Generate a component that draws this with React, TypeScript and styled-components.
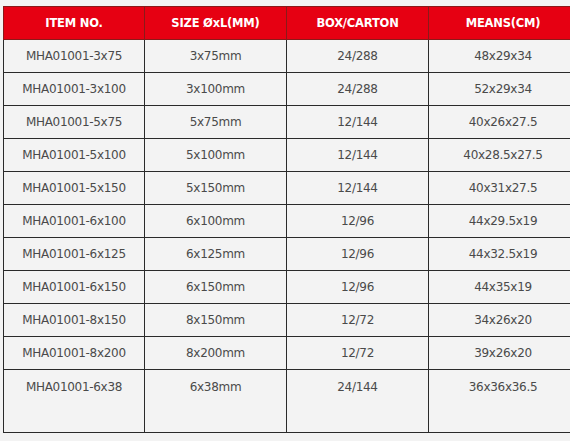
import React from 'react';
import styled, { createGlobalStyle } from 'styled-components';

const GlobalStyle = createGlobalStyle`
  html, body {
    margin: 0;
    padding: 0;
    background: #f3f3f3;
  }
`;

const Page = styled.div`
  padding: 6px 0 0 3px;
  width: 570px;
  height: 441px;
  box-sizing: border-box;
  overflow: hidden;
  background: #f3f3f3;
  font-family: 'DejaVu Sans', Verdana, sans-serif;
`;

const Table = styled.table`
  border-collapse: collapse;
  table-layout: fixed;
  width: 574px;
`;

const Col = styled.col<{ $w: number }>`
  width: ${({ $w }) => $w}px;
`;

const HeadCell = styled.th`
  height: 32px;
  padding: 0;
  background: #e60012;
  border: 1px solid #8a1a1a;
  color: #fff;
  font-size: 11.5px;
  font-weight: bold;
  letter-spacing: -0.2px;
  text-align: center;
  vertical-align: middle;
`;

const Cell = styled.td<{ $tall?: boolean }>`
  height: ${({ $tall }) => ($tall ? '63px' : '33px')};
  padding: ${({ $tall }) => ($tall ? '10px 0 0' : '0')};
  box-sizing: border-box;
  border: 1px solid #2a2a2a;
  color: #4a4a4a;
  font-size: 12px;
  letter-spacing: -0.3px;
  text-align: center;
  vertical-align: ${({ $tall }) => ($tall ? 'top' : 'middle')};
`;

const rows = [
  ['MHA01001-3x75', '3x75mm', '24/288', '48x29x34'],
  ['MHA01001-3x100', '3x100mm', '24/288', '52x29x34'],
  ['MHA01001-5x75', '5x75mm', '12/144', '40x26x27.5'],
  ['MHA01001-5x100', '5x100mm', '12/144', '40x28.5x27.5'],
  ['MHA01001-5x150', '5x150mm', '12/144', '40x31x27.5'],
  ['MHA01001-6x100', '6x100mm', '12/96', '44x29.5x19'],
  ['MHA01001-6x125', '6x125mm', '12/96', '44x32.5x19'],
  ['MHA01001-6x150', '6x150mm', '12/96', '44x35x19'],
  ['MHA01001-8x150', '8x150mm', '12/72', '34x26x20'],
  ['MHA01001-8x200', '8x200mm', '12/72', '39x26x20'],
  ['MHA01001-6x38', '6x38mm', '24/144', '36x36x36.5'],
];

const headers = ['ITEM NO.', 'SIZE ØxL(MM)', 'BOX/CARTON', 'MEANS(CM)'];
const colWidths = [141, 142, 142, 149];

export default function App() {
  return (
    <>
      <GlobalStyle />
      <Page>
        <Table>
          <colgroup>
            {colWidths.map((w, i) => (
              <Col key={i} $w={w} />
            ))}
          </colgroup>
          <thead>
            <tr>
              {headers.map((h) => (
                <HeadCell key={h}>{h}</HeadCell>
              ))}
            </tr>
          </thead>
          <tbody>
            {rows.map((r, i) => (
              <tr key={r[0]}>
                {r.map((c, j) => (
                  <Cell key={j} $tall={i === rows.length - 1}>
                    {c}
                  </Cell>
                ))}
              </tr>
            ))}
          </tbody>
        </Table>
      </Page>
    </>
  );
}
